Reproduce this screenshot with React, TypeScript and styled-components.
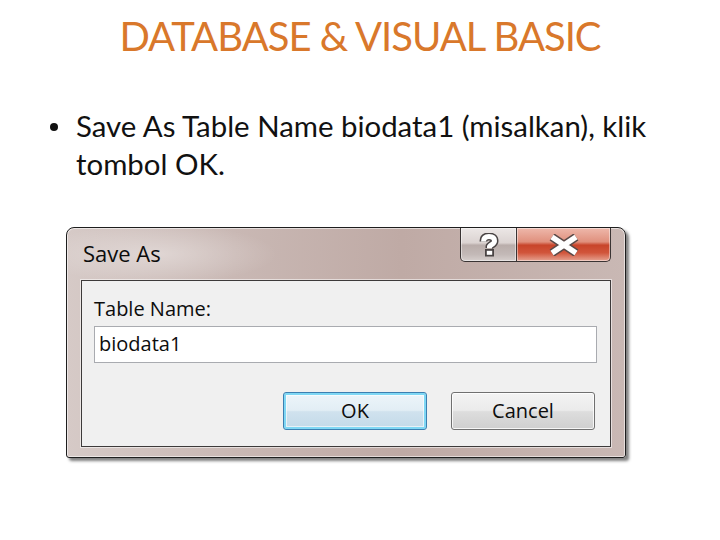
import React from "react";
import styled, { createGlobalStyle } from "styled-components";

const Global = createGlobalStyle`
  html, body { margin: 0; padding: 0; background: #ffffff; }
  body { width: 720px; height: 540px; overflow: hidden; }
`;

const Slide = styled.div`
  width: 720px;
  height: 540px;
  box-sizing: border-box;
  padding-top: 11px;
  display: flex;
  flex-direction: column;
  font-family: Lato, "Open Sans", sans-serif;
`;

const Title = styled.h1`
  margin: 0;
  font-weight: 400;
  font-size: 40px;
  letter-spacing: -1px;
  line-height: 50px;
  text-align: center;
  color: #d9782b;
`;

const Bullets = styled.ul`
  list-style: none;
  margin: 46px 0 0 0;
  padding: 0 30px 0 48px;
`;

const Item = styled.li`
  display: grid;
  grid-template-columns: 28px 1fr;
  font-size: 29.4px;
  line-height: 38px;
  color: #111111;
`;

const Dot = styled.span`
  width: 8px;
  height: 8px;
  border-radius: 50%;
  background: #111111;
  margin: 16px 0 0 2px;
`;

const DialogArea = styled.div`
  margin: 44px 0 0 66px;
`;

const Window = styled.div`
  width: 560px;
  height: 231px;
  box-sizing: border-box;
  border: 1px solid #1e1e1e;
  border-radius: 8px 8px 3px 3px;
  padding: 0 14px 10px 14px;
  display: flex;
  flex-direction: column;
  background:
    radial-gradient(ellipse 120px 30px at 90px 26px, rgba(255, 255, 255, 0.35), rgba(255, 255, 255, 0) 100%),
    linear-gradient(90deg, #d6cac7 0%, #c9b8b4 30%, #bfaaa5 60%, #c9b8b4 100%);
  box-shadow: inset 0 0 0 1px rgba(255, 255, 255, 0.55), 3px 3px 3px rgba(0, 0, 0, 0.5);
`;

const TitleBar = styled.div`
  height: 52px;
  display: flex;
  align-items: flex-start;
`;

const Caption = styled.span`
  font-family: "Open Sans", sans-serif;
  font-size: 22px;
  line-height: 26px;
  color: #0c0c0c;
  margin: 12px 0 0 2px;
`;

const CaptionButtons = styled.div`
  margin-left: auto;
  display: flex;
  height: 34px;
`;

const CapButton = styled.div<{ $kind: "help" | "close" }>`
  box-sizing: border-box;
  height: 34px;
  width: ${(p) => (p.$kind === "help" ? "57px" : "94px")};
  border: 1px solid #3a3434;
  border-top: none;
  border-left: ${(p) => (p.$kind === "help" ? "1px solid #3a3434" : "none")};
  border-radius: ${(p) => (p.$kind === "help" ? "0 0 0 5px" : "0 0 5px 0")};
  display: flex;
  align-items: center;
  justify-content: center;
  box-shadow: inset 0 0 0 1px rgba(255, 255, 255, 0.45);
  background: ${(p) =>
    p.$kind === "help"
      ? "linear-gradient(180deg, #ece7e6 0%, #dbd3d1 45%, #b9adaa 52%, #c3b9b7 80%, #d6cfcd 100%)"
      : "linear-gradient(180deg, #eeb8ab 0%, #e0907d 42%, #c8442a 52%, #d1553b 75%, #e6a392 100%)"};
`;

const Client = styled.div`
  flex: 1;
  box-sizing: border-box;
  border: 1px solid #3d3a3a;
  box-shadow: 0 0 0 1px rgba(255, 255, 255, 0.55);
  background: #f0f0f0;
  padding: 16px 13px 16px 12px;
  display: flex;
  flex-direction: column;
  font-family: "Open Sans", sans-serif;
  font-size: 20px;
  line-height: 24px;
  color: #0d0d0d;
`;

const Label = styled.label`
  display: block;
`;

const TextBox = styled.div`
  margin-top: 5px;
  height: 37px;
  box-sizing: border-box;
  border: 1px solid #a9abb0;
  background: #ffffff;
  padding: 5px 4px 0 4px;
`;

const ButtonRow = styled.div`
  margin-top: 29px;
  display: flex;
  justify-content: flex-end;
  gap: 24px;
  padding-right: 2px;
`;

const Button = styled.div<{ $focus?: boolean }>`
  width: 144px;
  height: 38px;
  box-sizing: border-box;
  border-radius: 3px;
  display: flex;
  align-items: center;
  justify-content: center;
  border: 1px solid ${(p) => (p.$focus ? "#3c7fb1" : "#707070")};
  box-shadow: ${(p) =>
    p.$focus
      ? "inset 0 0 0 2px #7fd7f4, inset 0 0 0 3px rgba(255,255,255,0.6)"
      : "inset 0 0 0 1px rgba(255,255,255,0.8)"};
  background: ${(p) =>
    p.$focus
      ? "linear-gradient(180deg, #edf5fa 0%, #e2eef5 48%, #d0e2ee 52%, #c2d9e8 100%)"
      : "linear-gradient(180deg, #f3f3f3 0%, #ebebeb 48%, #dddddd 52%, #cfcfcf 100%)"};
`;

const HelpIcon = () => (
  <svg width="22" height="24" viewBox="0 0 22 24">
    <path
      d="M5.5 8.5 C5.5 4.5 8 3.5 11 3.5 C14.5 3.5 16.5 5 16.5 8 C16.5 11 13 11.5 11.5 13.5 L11.5 15"
      fill="none"
      stroke="#4a4444"
      strokeWidth="8"
      strokeLinejoin="round"
    />
    <rect x="7" y="16" width="9" height="7.5" fill="#4a4444" />
    <path
      d="M5.5 8.5 C5.5 4.5 8 3.5 11 3.5 C14.5 3.5 16.5 5 16.5 8 C16.5 11 13 11.5 11.5 13.5 L11.5 15"
      fill="none"
      stroke="#ffffff"
      strokeWidth="5"
      strokeLinejoin="round"
    />
    <rect x="8.8" y="17.8" width="5.4" height="4" fill="#ffffff" />
  </svg>
);

const CloseIcon = () => (
  <svg width="34" height="22" viewBox="0 0 34 22">
    <path d="M5 3 L29 19 M29 3 L5 19" stroke="#5a4a48" strokeWidth="8.5" />
    <path d="M5 3 L29 19 M29 3 L5 19" stroke="#ffffff" strokeWidth="5.5" />
  </svg>
);

export default function App() {
  return (
    <>
      <Global />
      <Slide>
        <Title>DATABASE &amp; VISUAL BASIC</Title>
        <Bullets>
          <Item>
            <Dot />
            <span>Save As Table Name biodata1 (misalkan), klik tombol OK.</span>
          </Item>
        </Bullets>
        <DialogArea>
          <Window>
            <TitleBar>
              <Caption>Save As</Caption>
              <CaptionButtons>
                <CapButton $kind="help">
                  <HelpIcon />
                </CapButton>
                <CapButton $kind="close">
                  <CloseIcon />
                </CapButton>
              </CaptionButtons>
            </TitleBar>
            <Client>
              <Label>Table Name:</Label>
              <TextBox>biodata1</TextBox>
              <ButtonRow>
                <Button $focus>OK</Button>
                <Button>Cancel</Button>
              </ButtonRow>
            </Client>
          </Window>
        </DialogArea>
      </Slide>
    </>
  );
}
